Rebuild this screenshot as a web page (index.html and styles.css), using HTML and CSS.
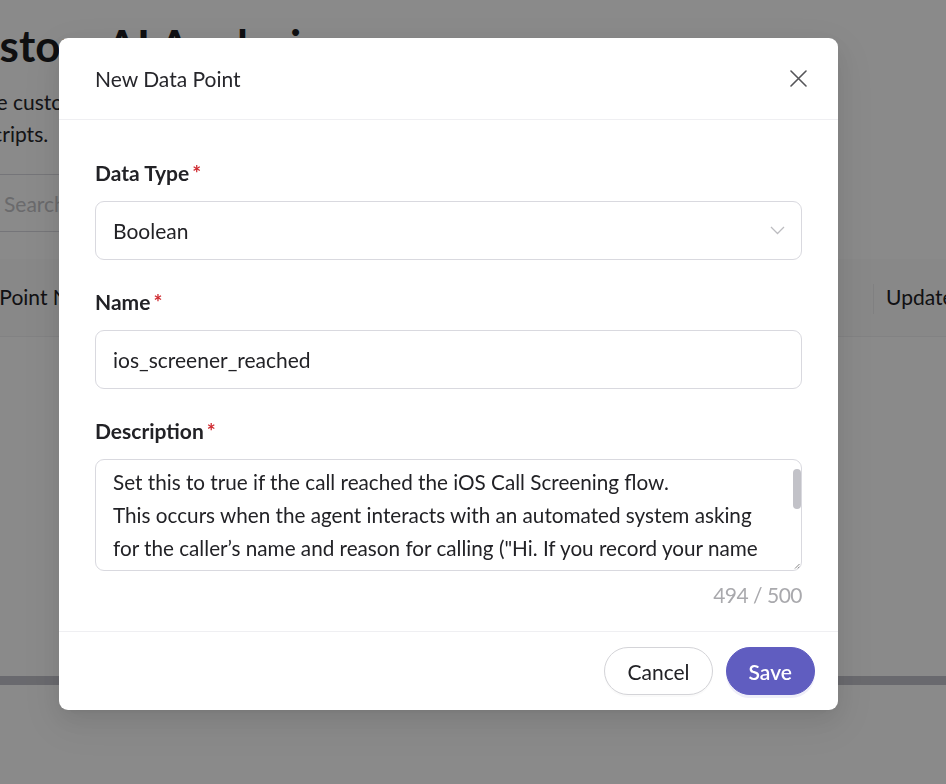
FILE: index.html
```html
<!DOCTYPE html>
<html lang="en">
<head>
<meta charset="utf-8">
<title>New Data Point</title>
<link rel="stylesheet" href="styles.css">
</head>
<body>
<div class="page">
  <h1 class="page-title">Custom AI Analysis</h1>
  <p class="page-desc">Define custom data points for AI to extract from your call<br>transcripts.</p>
  <div class="search"><span class="search-ph">Search</span></div>
  <div class="table">
    <div class="thead">
      <div class="th th-name">Data Point Name</div>
      <div class="th th-updated">Updated</div>
    </div>
    <div class="tbody"></div>
    <div class="hscroll"></div>
  </div>
</div>

<div class="overlay">
  <div class="modal" role="dialog" aria-label="New Data Point">
    <div class="modal-header">
      <div class="modal-title">New Data Point</div>
      <button class="modal-close" aria-label="Close">
        <svg width="17" height="17" viewBox="0 0 17 17"><path d="M1 1L16 16M16 1L1 16" stroke="#555559" stroke-width="1.6" stroke-linecap="round" fill="none"/></svg>
      </button>
    </div>
    <div class="modal-body">
      <div class="field">
        <label class="field-label">Data Type<span class="req">*</span></label>
        <div class="control select">
          <span>Boolean</span>
          <svg width="15" height="9" viewBox="0 0 15 9"><path d="M1 1L7.5 7.5L14 1" stroke="#bcbcc0" stroke-width="1.3" fill="none"/></svg>
        </div>
      </div>
      <div class="field">
        <label class="field-label">Name<span class="req">*</span></label>
        <div class="control">ios_screener_reached</div>
      </div>
      <div class="field">
        <label class="field-label">Description<span class="req">*</span></label>
        <div class="textarea">Set this to true if the call reached the iOS Call Screening flow.<br>This occurs when the agent interacts with an automated system asking for the caller’s name and reason for calling ("Hi. If you record your name and reason for calling, I'll see if this person is available.") rather than a live person or a standard voicemail greeting.<span class="thumb"></span><svg class="grip" width="6" height="6" viewBox="0 0 6 6"><path d="M5.5 1L1 5.5M5.5 3.5L3.5 5.5" stroke="#777" stroke-width="0.9"/></svg></div>
        <div class="counter">494 / 500</div>
      </div>
    </div>
    <div class="modal-footer">
      <button class="btn btn-default">Cancel</button>
      <button class="btn btn-primary">Save</button>
    </div>
  </div>
</div>
</body>
</html>
```

FILE: styles.css
```css
html, body {
  margin: 0;
  height: 100%;
  overflow: hidden;
}

body {
  font-family: Lato, "Noto Sans", sans-serif;
  background: #ffffff;
  color: #1f1f22;
}

/* background page */
.page {
  margin-left: -54px;
  padding-top: 19px;
  width: 1100px;
}

.page-title {
  margin: 0;
  font-size: 44px;
  font-weight: 700;
  line-height: 53px;
  color: #1c1c20;
}

.page-desc {
  margin: 14px 0 0;
  font-size: 21px;
  line-height: 32px;
  color: #26262a;
}

.search {
  box-sizing: border-box;
  width: 420px;
  height: 58px;
  margin-top: 24px;
  border: 1px solid #d9d9df;
  border-radius: 9px;
  display: flex;
  align-items: center;
  padding-left: 57px;
  font-size: 21px;
  color: #c4c4c8;
}

.table {
  margin-top: 27px;
}

.thead {
  display: flex;
  align-items: center;
  box-sizing: border-box;
  height: 78px;
  padding-bottom: 3px;
  background: #fbfbfc;
  border-bottom: 1px solid #f0f0f2;
  font-size: 21px;
  color: #202024;
}

.th-name {
  width: 927px;
  padding-left: 4px;
  box-sizing: border-box;
}

.th-updated {
  position: relative;
  padding-left: 13px;
}

.th-updated::before {
  content: "";
  position: absolute;
  left: 0;
  top: 0;
  width: 1px;
  height: 30px;
  background: #ececef;
}

.tbody {
  height: 339px;
}

.hscroll {
  height: 9px;
  background: #c3c3cb;
}

/* overlay + modal */
.overlay {
  position: fixed;
  inset: 0;
  background: rgba(0, 0, 0, 0.46);
  padding: 38px 0 0 59px;
  box-sizing: border-box;
}

.modal {
  width: 779px;
  background: #ffffff;
  border-radius: 9px;
  box-shadow: 0 9px 24px 0 rgba(0, 0, 0, 0.08), 0 4px 9px -6px rgba(0, 0, 0, 0.12), 0 13px 42px 12px rgba(0, 0, 0, 0.05);
}

.modal-header {
  display: flex;
  align-items: center;
  justify-content: space-between;
  padding: 24px 31px 24px 36px;
  border-bottom: 1px solid #efeff2;
}

.modal-title {
  font-size: 21px;
  line-height: 33px;
  color: #26262b;
}

.modal-close {
  width: 17px;
  height: 17px;
  padding: 0;
  border: 0;
  background: none;
  display: flex;
}

.modal-body {
  padding: 36px 36px 20px;
}

.field + .field {
  margin-top: 25px;
}

.field-label {
  display: block;
  font-size: 21px;
  font-weight: 700;
  line-height: 33px;
  margin-bottom: 12px;
  color: #222226;
}

.req {
  color: #cf2a30;
  font-size: 21px;
  margin-left: 3px;
}

.control {
  box-sizing: border-box;
  height: 59px;
  border: 1px solid #d9d9df;
  border-radius: 9px;
  padding: 0 16px 0 17px;
  display: flex;
  align-items: center;
  font-size: 21px;
  color: #222226;
}

.select {
  justify-content: space-between;
}

.textarea {
  position: relative;
  box-sizing: border-box;
  height: 112px;
  border: 1px solid #d9d9df;
  border-radius: 9px;
  padding: 6px 27px 6px 17px;
  font-size: 20.7px;
  line-height: 33px;
  color: #222226;
  overflow: hidden;
}

.thumb {
  position: absolute;
  top: 9px;
  right: 0;
  width: 8px;
  height: 40px;
  border-radius: 4px;
  background: #c2c2c8;
}

.grip {
  position: absolute;
  right: 1px;
  bottom: 1px;
}

.counter {
  margin-top: 7px;
  text-align: right;
  font-size: 21px;
  line-height: 33px;
  letter-spacing: -0.5px;
  color: #a9a9ad;
}

.modal-footer {
  display: flex;
  justify-content: flex-end;
  gap: 13px;
  padding: 15px 23px;
  border-top: 1px solid #efeff2;
}

.btn {
  box-sizing: border-box;
  height: 48px;
  border-radius: 24px;
  padding: 0 22px;
  font-family: inherit;
  font-size: 21px;
  line-height: 33px;
  cursor: pointer;
}

.btn-default {
  background: #ffffff;
  border: 1px solid #d4d4d8;
  color: #222226;
  box-shadow: 0 2px 0 rgba(0, 0, 0, 0.02);
}

.btn-primary {
  background: #605dc0;
  border: 1px solid #605dc0;
  color: #ffffff;
  font-weight: 600;
  box-shadow: 0 3px 0 rgba(96, 93, 192, 0.1);
}
```
